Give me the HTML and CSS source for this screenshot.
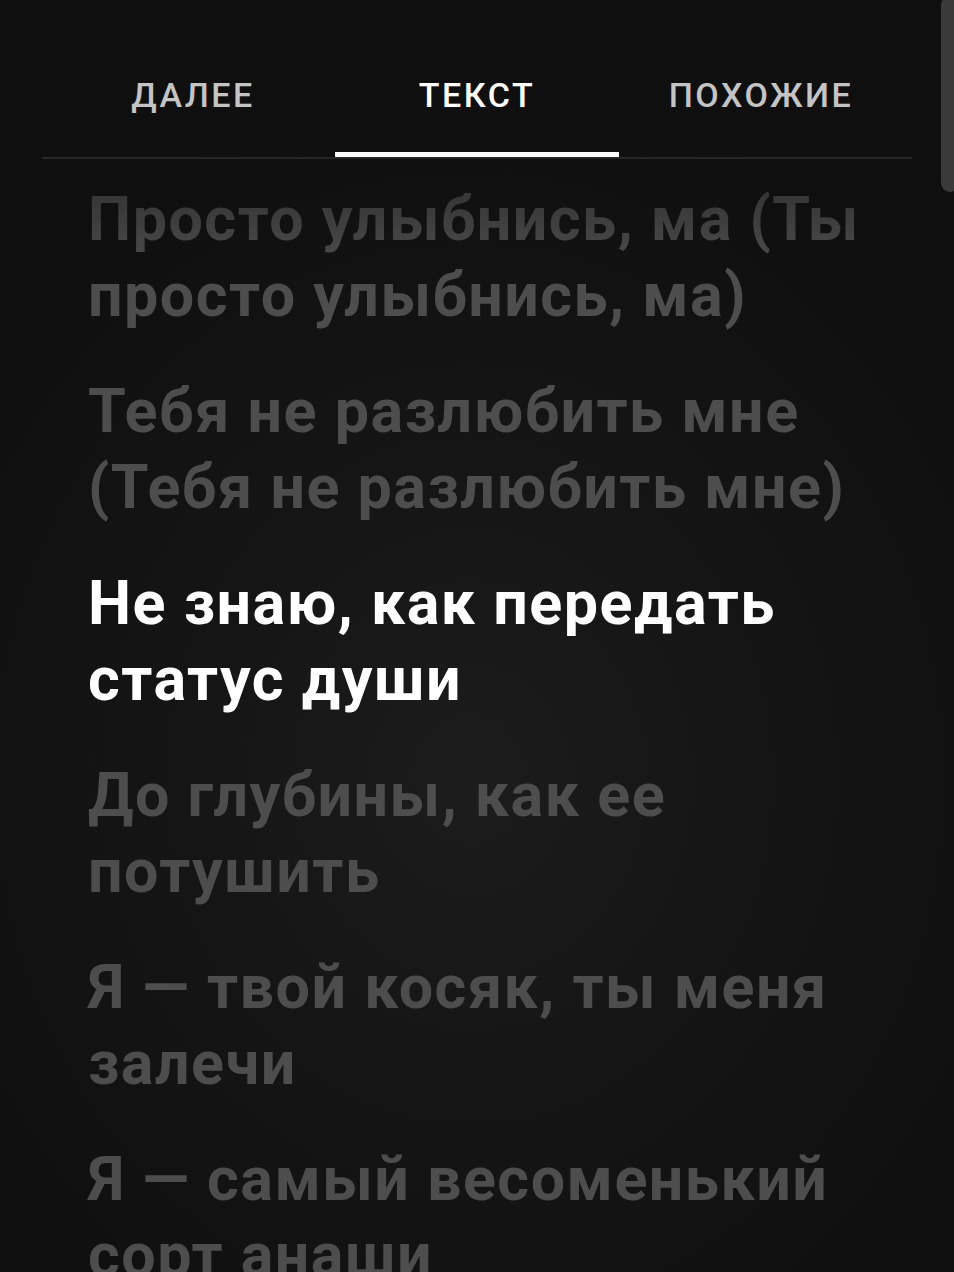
FILE: index.html
```html
<!DOCTYPE html>
<html lang="ru">
<head>
<meta charset="utf-8">
<title>Текст</title>
<link rel="stylesheet" href="styles.css">
</head>
<body>
<div class="screen">
  <nav class="tabs">
    <div class="tab">ДАЛЕЕ</div>
    <div class="tab tab-active">ТЕКСТ</div>
    <div class="tab">ПОХОЖИЕ</div>
  </nav>
  <div class="lyrics">
    <p class="line dim first">Просто улыбнись, ма (Ты просто улыбнись, ма)</p>
    <p class="line dim">Тебя не разлюбить мне (Тебя не разлюбить мне)</p>
    <p class="line current">Не знаю, как передать статус души</p>
    <p class="line dim">До глубины, как ее потушить</p>
    <p class="line dim">Я — твой косяк, ты меня залечи</p>
    <p class="line dim">Я — самый весоменький сорт анаши</p>
  </div>
  <div class="scroll-thumb"></div>
</div>
</body>
</html>
```

FILE: styles.css
```css
html, body {
  margin: 0;
  padding: 0;
  background: #0e0e0e;
}

.screen {
  position: relative;
  width: 954px;
  height: 1272px;
  overflow: hidden;
  background:
    radial-gradient(ellipse 620px 700px at 470px 780px, #1c1c1c 0%, #151515 45%, #0f0f0f 100%);
  font-family: Roboto, "Noto Sans", "Liberation Sans", sans-serif;
}

.tabs {
  display: grid;
  grid-template-columns: repeat(3, 1fr);
  margin: 0 42px;
  padding: 0 9px;
  border-bottom: 2px solid #272727;
}

.tab {
  position: relative;
  padding: 75px 0 42px;
  line-height: 40px;
  font-size: 34px;
  font-weight: 500;
  letter-spacing: 2.5px;
  text-align: center;
  color: #c4c4c4;
}

.tab-active {
  color: #ffffff;
}

.tab-active::after {
  content: "";
  position: absolute;
  left: 0;
  right: 0;
  bottom: 0;
  height: 5px;
  background: #ffffff;
}

.lyrics {
  padding: 22px 66px 0 88px;
  -webkit-mask-image: linear-gradient(to bottom, rgba(0,0,0,0.45) 0px, #000 110px);
  mask-image: linear-gradient(to bottom, rgba(0,0,0,0.45) 0px, #000 110px);
}

.line {
  margin: 0 0 40px;
  font-size: 61px;
  line-height: 76px;
  font-weight: 700;
  letter-spacing: 1.5px;
}

.dim {
  color: #4d4d4d;
}

.current {
  color: #ffffff;
}

.scroll-thumb {
  position: absolute;
  top: -4px;
  right: -5px;
  width: 18px;
  height: 196px;
  border-radius: 9px;
  background: #3a3a3a;
}
```
